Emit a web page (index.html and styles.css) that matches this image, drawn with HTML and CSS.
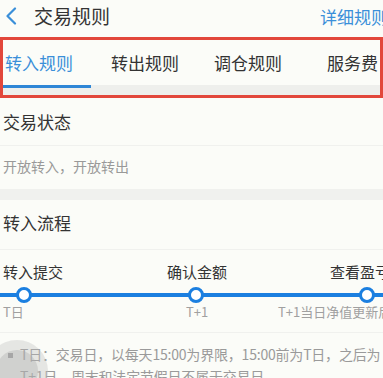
FILE: index.html
```html
<!DOCTYPE html>
<html lang="zh">
<head>
<meta charset="utf-8">
<link rel="stylesheet" href="styles.css">
</head>
<body>
<div class="page">
  <header class="topbar">
    <svg class="back" width="12" height="18" viewBox="0 0 12 18"><path d="M10 1.5 L2.5 9 L10 16.5" fill="none" stroke="#3a8fd9" stroke-width="2.2" stroke-linecap="round" stroke-linejoin="round"/></svg>
    <span class="title">交易规则</span>
    <span class="more">详细规则</span>
  </header>
  <nav class="tabs-box">
    <div class="tabs">
      <div class="tab active">转入规则</div>
      <div class="tab">转出规则</div>
      <div class="tab">调仓规则</div>
      <div class="tab">服务费</div>
    </div>
    <div class="tab-strip"><div class="indicator"></div></div>
  </nav>
  <section class="block">
    <div class="block-title">交易状态</div>
    <div class="status">开放转入，开放转出</div>
  </section>
  <div class="gap"></div>
  <section class="block flow">
    <div class="block-title">转入流程</div>
    <div class="steps">
      <div class="step-labels">
        <span class="s1">转入提交</span>
        <span class="s2">确认金额</span>
        <span class="s3">查看盈亏</span>
      </div>
      <div class="track">
        <span class="dot d1"></span>
        <span class="dot d2"></span>
        <span class="dot d3"></span>
      </div>
      <div class="step-sub">
        <span class="s1">T日</span>
        <span class="s2">T+1</span>
        <span class="s3">T+1当日净值更新后</span>
      </div>
    </div>
    <div class="note">
      <span class="bullet"></span>
      <p>T日：交易日，以每天15:00为界限，15:00前为T日，之后为<br>T+1日，周末和法定节假日不属于交易日</p>
    </div>
  </section>
  <div class="float-btn"><div class="float-inner"></div></div>
</div>
</body>
</html>
```
FILE: styles.css
```css
* { box-sizing: border-box; }
html, body { margin: 0; padding: 0; }
body {
  background: #fbfcf8;
  font-family: "Noto Sans CJK SC", "Noto Sans", sans-serif;
  width: 383px;
  height: 378px;
  overflow: hidden;
}
.page { position: relative; width: 383px; height: 378px; overflow: hidden; }
.topbar {
  height: 37px;
  display: flex;
  align-items: center;
  padding-left: 5px;
  position: relative;
  background: #fbfcf8;
}
.back { margin-right: 17px; margin-top: -5px; }
.title { font-size: 19px; color: #333; margin-top: -7px; }
.more {
  position: absolute;
  left: 320px;
  top: 4px;
  font-size: 17px;
  color: #3a8fd9;
  white-space: nowrap;
}
.tabs-box {
  border: 3px solid #e2473b;
  height: 61px;
  display: flex;
  flex-direction: column;
  background: #fbfcf8;
}
.tabs {
  height: 45px;
  display: flex;
  align-items: center;
}
.tab {
  font-size: 17px;
  color: #333;
  white-space: nowrap;
}
.tab:nth-child(1) { margin-left: 2px; color: #3a8fd9; }
.tab:nth-child(2) { margin-left: 38px; }
.tab:nth-child(3) { margin-left: 35px; }
.tab:nth-child(4) { margin-left: 45px; }
.tab-strip {
  flex: 1;
  background: #eeefec;
  position: relative;
}
.indicator {
  width: 88px;
  height: 3px;
  background: #2e86d6;
}
.block { background: #fbfcf8; }
.block-title {
  font-size: 17px;
  color: #333;
  height: 48px;
  line-height: 48px;
  padding-left: 3px;
  border-bottom: 1px solid #f0f1ee;
}
.status {
  font-size: 14px;
  color: #999;
  height: 43px;
  line-height: 40px;
  padding-left: 3px;
}
.gap { height: 11px; background: #f0f1ee; }
.flow .block-title { height: 50px; line-height: 46px; }
.steps {
  position: relative;
  height: 83px;
  border-bottom: 1px solid #f0f1ee;
}
.step-labels, .step-sub { position: relative; white-space: nowrap; }
.step-labels { height: 38px; font-size: 15px; color: #333; }
.step-labels span, .step-sub span { position: absolute; }
.step-labels span { top: 11px; }
.step-labels .s1 { left: 3px; }
.step-labels .s2 { left: 167px; }
.step-labels .s3 { left: 330px; }
.track {
  position: relative;
  height: 4px;
  background: #1b7fe0;
  margin-top: 5px;
}
.dot {
  position: absolute;
  top: -6px;
  width: 16px;
  height: 16px;
  border-radius: 50%;
  background: #fff;
  border: 3px solid #1b7fe0;
}
.d1 { left: 16px; }
.d2 { left: 188px; }
.d3 { left: 359px; }
.step-sub { font-size: 13px; color: #a0a0a0; height: 30px; }
.step-sub span { top: 5px; }
.step-sub .s1 { left: 3px; }
.step-sub .s2 { left: 186px; }
.step-sub .s3 { left: 278px; }
.note {
  display: flex;
  align-items: flex-start;
  padding-left: 8px;
  padding-top: 10px;
}
.bullet {
  width: 5px;
  height: 5px;
  background: #999;
  margin-top: 10px;
  margin-right: 7px;
  flex: none;
}
.note p {
  margin: 0;
  font-size: 14px;
  line-height: 22px;
  color: #9a9a9a;
  white-space: nowrap;
  letter-spacing: -0.2px;
}
.float-btn {
  position: absolute;
  left: -14px;
  top: 340px;
  width: 62px;
  height: 62px;
  border-radius: 50%;
  background: rgba(190, 190, 190, 0.35);
  display: flex;
  align-items: center;
  justify-content: center;
}
.float-inner {
  width: 42px;
  height: 42px;
  border-radius: 50%;
  background: rgba(170, 170, 170, 0.35);
}
```
